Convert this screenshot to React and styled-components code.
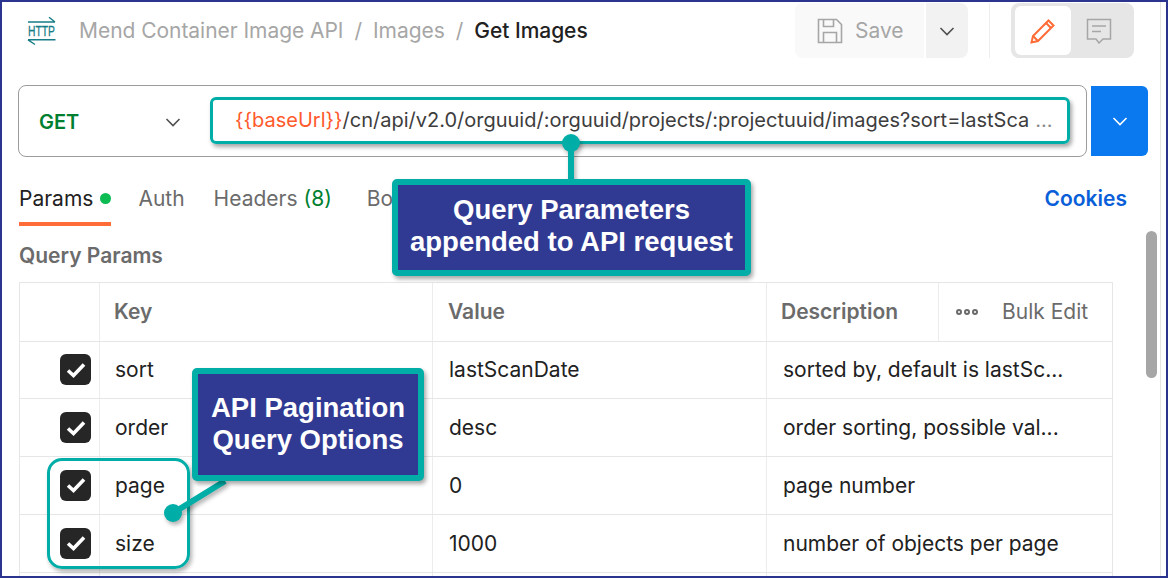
import React from 'react';
import styled, { createGlobalStyle } from 'styled-components';

const GlobalStyle = createGlobalStyle`
  html, body { margin: 0; padding: 0; background: #fff; }
  * { box-sizing: border-box; }
`;

const teal = '#00ada7';
const navy = '#303a93';

const Frame = styled.div`
  position: relative;
  width: 1168px;
  height: 578px;
  border: 2px solid #2b3590;
  overflow: hidden;
  font-family: Inter, "Noto Sans", sans-serif;
  background: #fff;
`;

const Panel = styled.div`
  position: relative;
  width: 1159px;
  height: 574px;
  border-right: 1px solid #e6e6e6;
  padding: 1px 0 0 16px;
`;

const Header = styled.header`
  display: flex;
  align-items: center;
  height: 55px;
`;

const HttpLogo = styled.svg`
  width: 30px;
  height: 30px;
  margin-left: 9px;
  margin-right: 22px;
  flex: none;
  overflow: visible;
`;

const Crumbs = styled.nav`
  display: flex;
  align-items: center;
  gap: 11px;
  font-size: 21px;
  letter-spacing: -0.04px;
  color: #a6a6a6;
  flex: 1;
`;

const CrumbCurrent = styled.span`
  color: #212121;
  font-weight: 500;
`;

const SaveButton = styled.div`
  display: flex;
  align-items: center;
  gap: 12px;
  width: 129px;
  height: 55px;
  padding-left: 22px;
  background: #f9f9f9;
  border-radius: 8px 0 0 8px;
  color: #a6a6a6;
  font-size: 21px;
`;

const SaveCaret = styled.div`
  display: flex;
  align-items: center;
  justify-content: center;
  width: 42px;
  height: 55px;
  margin-left: 2px;
  background: #f2f2f2;
  border-radius: 0 8px 8px 0;
  color: #505050;
`;

const HeaderDivider = styled.div`
  width: 1px;
  height: 55px;
  margin: 0 21px;
  background: #ededed;
`;

const ModeSwitch = styled.div`
  display: flex;
  width: 123px;
  height: 55px;
  padding: 3px 4px;
  margin-right: 26px;
  background: #e6e6e6;
  border-radius: 8px;
`;

const ModeButton = styled.div`
  display: flex;
  align-items: center;
  justify-content: center;
  width: 56px;
  height: 49px;
  border-radius: 6px;
  background: ${p => (p.$active ? '#fff' : 'transparent')};
`;

const RequestRow = styled.div`
  display: flex;
  gap: 4px;
  margin-top: 27px;
`;

const RequestBox = styled.div`
  display: flex;
  align-items: center;
  width: 1069px;
  height: 72px;
  border: 1px solid #9c9c9c;
  border-radius: 8px;
`;

const MethodSelect = styled.div`
  display: flex;
  align-items: center;
  justify-content: space-between;
  width: 191px;
  padding: 2px 28px 0 20px;
  font-size: 20px;
  font-weight: 600;
  color: #007f31;
`;

const UrlField = styled.div`
  width: 860px;
  height: 47px;
  margin-bottom: 2px;
  padding-left: 22px;
  display: flex;
  align-items: center;
  border: 3.5px solid ${teal};
  border-radius: 6px;
  box-shadow: 2px 3px 4px rgba(0, 0, 0, 0.35);
  font-size: 20px;
  color: #3d3d3d;
  white-space: nowrap;
`;

const UrlVar = styled.span`
  color: #ff5a2b;
`;

const UrlMore = styled.span`
  color: #8a8a8a;
  margin-left: 6px;
`;

const SendCaret = styled.div`
  display: flex;
  align-items: center;
  justify-content: center;
  width: 57px;
  height: 70px;
  margin-top: 1px;
  background: #0a78ee;
  border-radius: 0 6px 6px 0;
  color: #fff;
`;

const Tabs = styled.div`
  display: flex;
  align-items: flex-start;
  height: 84px;
  margin-left: 1px;
  padding-top: 28px;
  width: 1108px;
  font-size: 21px;
  color: #6b6b6b;
`;

const Tab = styled.div`
  position: relative;
  display: flex;
  align-items: center;
  height: 26px;
  margin-left: ${p => p.$gap || 0}px;
  color: ${p => (p.$active ? '#212121' : '#6b6b6b')};
  ${p => p.$active && `
    &::after {
      content: '';
      position: absolute;
      left: 0;
      right: 0;
      top: 37px;
      height: 4px;
      background: #ff6c37;
    }
  `}
`;

const TabDot = styled.span`
  width: 11px;
  height: 11px;
  margin-left: 7px;
  border-radius: 50%;
  background: #0cbb52;
`;

const TabCount = styled.span`
  color: #007f31;
  margin-left: 6px;
`;

const CookiesLink = styled.a`
  margin-left: auto;
  font-weight: 600;
  color: #0a5fd8;
  height: 26px;
  display: flex;
  align-items: center;
`;

const SectionTitle = styled.div`
  height: 41px;
  margin-left: 1px;
  padding-top: 2px;
  font-size: 21px;
  font-weight: 600;
  color: #6b6b6b;
`;

const Table = styled.div`
  width: 1094px;
  margin-left: 1px;
  border-top: 1.5px solid #e6e6e6;
  border-left: 1.5px solid #e6e6e6;
  border-right: 1.5px solid #e6e6e6;
`;

const Row = styled.div`
  display: grid;
  grid-template-columns: 80px 333px 334px 172px 1fr;
  height: ${p => (p.$head ? 58.5 : 57.75)}px;
  border-bottom: 1.5px solid #e6e6e6;
  align-items: stretch;
  font-size: 21px;
  color: #212121;
`;

const Cell = styled.div`
  display: flex;
  align-items: center;
  justify-content: ${p => (p.$center ? 'flex-end' : 'flex-start')};
  padding: ${p => (p.$center ? '0 8px 0 0' : `0 0 0 ${p.$pad || 16}px`)};
  border-right: ${p => (p.$last ? 'none' : '1.5px solid #ececec')};
  white-space: nowrap;
  overflow: hidden;
`;

const DescCell = styled(Cell)`
  grid-column: span 2;
  border-right: none;
`;

const HeadCell = styled(Cell)`
  font-weight: 600;
  color: #6b6b6b;
`;

const BulkCell = styled(Cell)`
  color: #6b6b6b;
  padding-left: 17px;
  gap: 24px;
`;

const MoreDots = styled.span`
  display: flex;
  gap: 2px;
`;

const MoreDot = styled.span`
  width: 6px;
  height: 6px;
  border: 2px solid #6b6b6b;
  border-radius: 50%;
`;

const Check = styled.span`
  display: flex;
  align-items: center;
  justify-content: center;
  width: 31px;
  height: 31px;
  border-radius: 6px;
  background: #262626;
`;

const Scrollbar = styled.div`
  position: absolute;
  left: 1144px;
  top: 229px;
  width: 11px;
  height: 147px;
  border-radius: 6px;
  background: #a6a6a6;
`;

const Connectors = styled.svg`
  position: absolute;
  inset: 0;
  width: 1164px;
  height: 574px;
  pointer-events: none;
  filter: drop-shadow(2px 3px 2px rgba(0, 0, 0, 0.3));
`;

const Callout = styled.div`
  position: absolute;
  left: ${p => p.$x}px;
  top: ${p => p.$y}px;
  width: ${p => p.$w}px;
  height: ${p => p.$h}px;
  display: flex;
  align-items: center;
  justify-content: center;
  padding-bottom: ${p => p.$lift}px;
  text-align: center;
  background: ${navy};
  border: 6px solid ${teal};
  border-radius: 5px;
  box-shadow: 2px 3px 4px rgba(0, 0, 0, 0.35);
  color: #fff;
  font-family: "Liberation Sans", Arial, sans-serif;
  font-size: 27.5px;
  font-weight: 700;
  line-height: 32px;
`;

const RowHighlight = styled.div`
  position: absolute;
  left: 45px;
  top: 456px;
  width: 143px;
  height: 111px;
  border: 3px solid ${teal};
  border-radius: 15px;
  box-shadow: 2px 3px 4px rgba(0, 0, 0, 0.3);
`;

const Chevron = ({ size = 18, color = 'currentColor' }) => (
  <svg width={size} height={size} viewBox="0 0 18 18" fill="none" stroke={color} strokeWidth="1.6">
    <path d="M2.5 6l6.5 6.5L15.500 6" />
  </svg>
);

const CheckMark = () => (
  <svg width="24" height="24" viewBox="0 0 24 24" fill="none" stroke="#fff" strokeWidth="3.6">
    <path d="M4 12.500l5.500 5L20 6.500" />
  </svg>
);

const params = [
  { key: 'sort', value: 'lastScanDate', desc: 'sorted by, default is lastSc...' },
  { key: 'order', value: 'desc', desc: 'order sorting, possible val...' },
  { key: 'page', value: '0', desc: 'page number' },
  { key: 'size', value: '1000', desc: 'number of objects per page' },
];

export default function App() {
  return (
    <Frame>
      <GlobalStyle />
      <Panel>
        <Header>
          <HttpLogo viewBox="0 0 30 30" fill="none" stroke="#167c87" strokeWidth="1.400">
            <path d="M1 6H28M22 1.200L28 6M1 23.800H28.500M1 23.800L8 28.500" />
            <text x="1" y="19.800" stroke="#167c87" strokeWidth="0.300" fill="#167c87" fontFamily="Liberation Sans" fontSize="15.400" textLength="27" lengthAdjust="spacingAndGlyphs">HTTP</text>
          </HttpLogo>
          <Crumbs>
            <span>Mend Container Image API</span>
            <span>/</span>
            <span>Images</span>
            <span>/</span>
            <CrumbCurrent>Get Images</CrumbCurrent>
          </Crumbs>
          <SaveButton>
            <svg width="26" height="26" viewBox="0 0 26 26" fill="none" stroke="#a6a6a6" strokeWidth="1.600">
              <path d="M1.500 1.500H19.500L24.500 6.500V24.500H1.500Z" />
              <path d="M6.500 1.500V8.500H16.500V1.500M6.500 24.500V14.500H19.500V24.500" />
            </svg>
            Save
          </SaveButton>
          <SaveCaret><Chevron /></SaveCaret>
          <HeaderDivider />
          <ModeSwitch>
            <ModeButton $active>
              <svg width="26" height="26" viewBox="0 0 26 26" fill="none" stroke="#ff6c37" strokeWidth="2">
                <path d="M1.500 24.500L3 18 18.500 2.500 23.500 7.500 8 23Z" />
                <path d="M16 5L21 10M3 18L8 23" />
              </svg>
            </ModeButton>
            <ModeButton>
              <svg width="26" height="26" viewBox="0 0 26 26" fill="none" stroke="#a6a6a6" strokeWidth="1.500">
                <path d="M1.500 1.500H24.500V21H17L13 25 10 21H1.500Z" />
                <path d="M6 8H20M6 13.500H15" />
              </svg>
            </ModeButton>
          </ModeSwitch>
        </Header>

        <RequestRow>
          <RequestBox>
            <MethodSelect>
              GET
              <Chevron color="#505050" />
            </MethodSelect>
            <UrlField>
              <UrlVar>{'{{baseUrl}}'}</UrlVar>
              /cn/api/v2.0/orguuid/:orguuid/projects/:projectuuid/images?sort=lastSca
              <UrlMore>...</UrlMore>
            </UrlField>
          </RequestBox>
          <SendCaret><Chevron /></SendCaret>
        </RequestRow>

        <Tabs>
          <Tab $active>Params<TabDot /></Tab>
          <Tab $gap={27}>Auth</Tab>
          <Tab $gap={29}>Headers<TabCount>(8)</TabCount></Tab>
          <Tab $gap={35}>Body</Tab>
          <CookiesLink>Cookies</CookiesLink>
        </Tabs>

        <SectionTitle>Query Params</SectionTitle>

        <Table>
          <Row $head>
            <Cell />
            <HeadCell $pad={14}>Key</HeadCell>
            <HeadCell $pad={15}>Value</HeadCell>
            <HeadCell $pad={14}>Description</HeadCell>
            <BulkCell $last>
              <MoreDots><MoreDot /><MoreDot /><MoreDot /></MoreDots>
              Bulk Edit
            </BulkCell>
          </Row>
          {params.map(p => (
            <Row key={p.key}>
              <Cell $center><Check><CheckMark /></Check></Cell>
              <Cell $pad={15}>{p.key}</Cell>
              <Cell>{p.value}</Cell>
              <DescCell>{p.desc}</DescCell>
            </Row>
          ))}
          <Row>
            <Cell />
            <Cell />
            <Cell />
            <DescCell />
          </Row>
        </Table>

        <Scrollbar />
      </Panel>

      <RowHighlight />
      <Connectors viewBox="0 0 1164 574">
        <path d="M569 141V180" stroke={teal} strokeWidth="6" />
        <circle cx="569" cy="141" r="9" fill={teal} />
        <path d="M171 511L223 479" stroke={teal} strokeWidth="6" />
        <circle cx="171" cy="511" r="9" fill={teal} />
      </Connectors>
      <Callout $x={390} $y={177} $w={359} $h={97} $lift={4}>
        <span>Query Parameters<br />appended to API request</span>
      </Callout>
      <Callout $x={190} $y={366} $w={232} $h={113} $lift={2}>
        <span>API Pagination<br />Query Options</span>
      </Callout>
    </Frame>
  );
}
